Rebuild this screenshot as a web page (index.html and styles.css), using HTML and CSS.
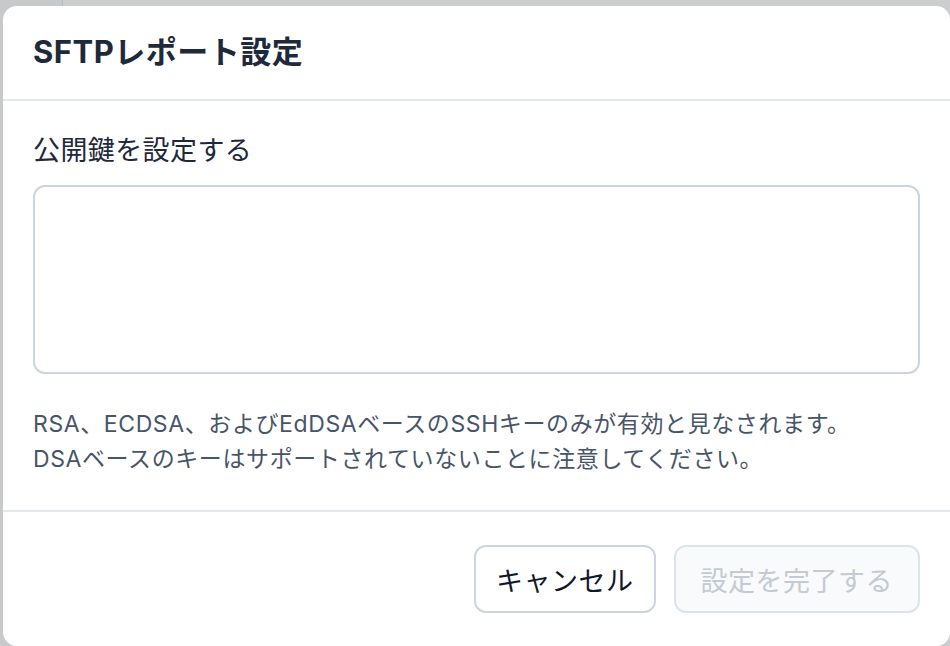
FILE: index.html
```html
<!DOCTYPE html>
<html lang="ja">
<head>
    <meta charset="UTF-8">
    <meta name="viewport" content="width=device-width, initial-scale=1.0">
    <title>SFTPレポート設定</title>
    <link rel="stylesheet" href="styles.css">
</head>
<body>
<div class="app">
    <div class="sidebar"></div>
    <div class="main"></div>
</div>
<div class="modal">
    <div class="modal-header">
        <h2 class="modal-title">SFTPレポート設定</h2>
    </div>
    <div class="modal-body">
        <label class="field-label" for="publicKey">公開鍵を設定する</label>
        <textarea id="publicKey" class="key-input"></textarea>
        <p class="help-text">
            RSA、ECDSA、およびEdDSAベースのSSHキーのみが有効と見なされます。<br>
            DSAベースのキーはサポートされていないことに注意してください。
        </p>
    </div>
    <div class="modal-footer">
        <button class="btn btn-cancel">キャンセル</button>
        <button class="btn btn-submit" disabled>設定を完了する</button>
    </div>
</div>
</body>
</html>
```

FILE: styles.css
```css
body {
    margin: 0;
    background-color: #c9cbcd;
    font-family: Inter, "Noto Sans CJK JP", sans-serif;
    color: #1e293b;
    height: 646px;
    overflow: hidden;
}
.app {
    display: flex;
    height: 100%;
}
.sidebar {
    width: 62px;
    border-right: 1px solid #b6bcc3;
    background-color: #c7c9cb;
}
.main {
    flex: 1;
    background-color: #cbcdcf;
}
.modal {
    position: absolute;
    top: 6px;
    left: 3px;
    width: 947px;
    height: 640px;
    background: white;
    border-radius: 14px;
    display: flex;
    flex-direction: column;
}
.modal-header {
    padding: 26px 30px 27px;
    border-bottom: 2px solid #e2e8f0;
}
.modal-title {
    margin: 0;
    font-size: 31px;
    line-height: 40px;
    font-weight: 700;
    letter-spacing: 0.5px;
    color: #1e293b;
}
.modal-body {
    padding: 30px 30px 33px;
    display: flex;
    flex-direction: column;
    border-bottom: 2px solid #e2e8f0;
}
.field-label {
    font-size: 27px;
    line-height: 40px;
    letter-spacing: 0.4px;
    color: #1e293b;
    margin-bottom: 14px;
}
.key-input {
    height: 189px;
    box-sizing: border-box;
    border: 2px solid #cbd5e1;
    border-radius: 12px;
    resize: none;
    font-family: inherit;
    font-size: 22px;
    padding: 12px 16px;
    outline: none;
}
.help-text {
    margin: 33px 0 0;
    font-size: 23px;
    line-height: 35px;
    letter-spacing: 0.6px;
    color: #475569;
}
.modal-footer {
    display: flex;
    justify-content: flex-end;
    gap: 18px;
    padding: 33px 30px 0;
}
.btn {
    height: 68px;
    padding: 0 20px;
    border-radius: 12px;
    font-family: inherit;
    font-size: 27px;
    letter-spacing: 0.5px;
    background: white;
    border: 2px solid #cbd5e1;
    color: #0f172a;
}
.btn-submit {
    padding: 0 25px;
    background-color: #f8fafc;
    border-color: #dbe3ec;
    color: #c3cad3;
}
```
